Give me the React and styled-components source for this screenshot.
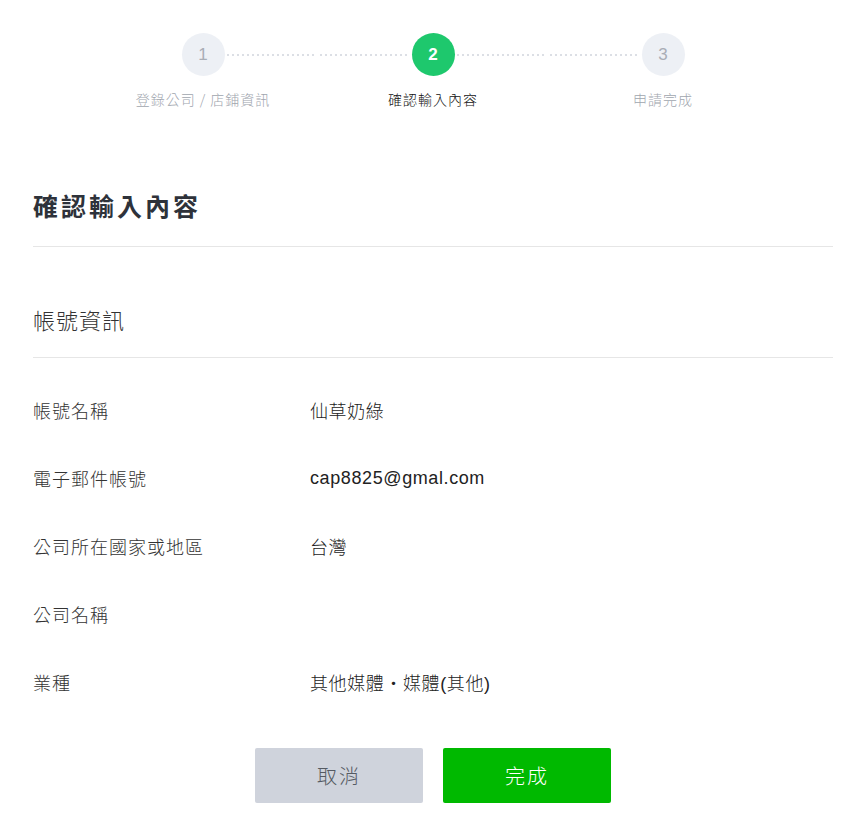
import styled, { createGlobalStyle } from "styled-components";

const GlobalStyle = createGlobalStyle`
  body {
    margin: 0;
    background: #ffffff;
    font-family: "Liberation Sans", "Noto Sans CJK TC", sans-serif;
    color: #333;
  }
`;

const steps = ["登錄公司 / 店鋪資訊", "確認輸入內容", "申請完成"];
const activeStep = 1;

const rows = [
  { label: "帳號名稱", value: "仙草奶綠" },
  { label: "電子郵件帳號", value: "cap8825@gmal.com" },
  { label: "公司所在國家或地區", value: "台灣" },
  { label: "公司名稱", value: "" },
  { label: "業種", value: "其他媒體・媒體(其他)" },
];

function App() {
  return (
    <>
      <GlobalStyle />
      <Page>
        <Stepper>
          {steps.map((s, i) => (
            <Step key={s}>
              <StepTrack>
                <Dots $hidden={i === 0} />
                <Circle $active={i === activeStep}>{i + 1}</Circle>
                <Dots $hidden={i === steps.length - 1} />
              </StepTrack>
              <StepLabel $active={i === activeStep}>{s}</StepLabel>
            </Step>
          ))}
        </Stepper>

        <Title>確認輸入內容</Title>
        <SectionTitle>帳號資訊</SectionTitle>

        <List>
          {rows.map((r) => (
            <Row key={r.label}>
              <Label>{r.label}</Label>
              <Value>{r.value}</Value>
            </Row>
          ))}
        </List>

        <Buttons>
          <Button>取消</Button>
          <Button $primary>完成</Button>
        </Buttons>
      </Page>
    </>
  );
}

const Page = styled.div`
  width: 800px;
  padding: 33px 10px 12px 33px;
`;

const Stepper = styled.div`
  display: grid;
  grid-template-columns: repeat(3, 230px);
  justify-content: center;
`;

const Step = styled.div`
  display: flex;
  flex-direction: column;
  align-items: center;
`;

const StepTrack = styled.div`
  width: 100%;
  display: flex;
  align-items: center;
`;

const Dots = styled.div`
  flex: 1;
  height: 2px;
  margin: 0 2px;
  visibility: ${(p) => (p.$hidden ? "hidden" : "visible")};
  background-image: repeating-linear-gradient(
    to right,
    #dcdfe5 0,
    #dcdfe5 2px,
    transparent 2px,
    transparent 5px
  );
`;

const Circle = styled.div`
  width: 43px;
  height: 43px;
  border-radius: 50%;
  display: flex;
  align-items: center;
  justify-content: center;
  font-family: "Liberation Sans", sans-serif;
  font-size: 17px;
  font-weight: ${(p) => (p.$active ? 700 : 400)};
  background: ${(p) => (p.$active ? "#1ec86d" : "#edf0f5")};
  color: ${(p) => (p.$active ? "#ffffff" : "#a9adb6")};
`;

const StepLabel = styled.div`
  margin-top: 13px;
  font-family: "Noto Sans CJK TC", sans-serif;
  font-size: 14px;
  line-height: 20px;
  font-weight: 300;
  letter-spacing: 1px;
  white-space: nowrap;
  color: ${(p) => (p.$active ? "#111111" : "#a0a5ae")};
`;

const Title = styled.h1`
  margin: 78px 0 0;
  padding-bottom: 23px;
  border-bottom: 1px solid #e6e6e6;
  font-family: "Noto Sans CJK TC", sans-serif;
  font-size: 25px;
  line-height: 36px;
  font-weight: 700;
  letter-spacing: 3px;
  color: #2e323a;
`;

const SectionTitle = styled.h2`
  margin: 0;
  padding: 57px 0 23px;
  border-bottom: 1px solid #e6e6e6;
  font-family: "Noto Sans CJK TC", sans-serif;
  font-size: 22px;
  line-height: 30px;
  font-weight: 300;
  letter-spacing: 1px;
  color: #333;
`;

const List = styled.div`
  padding-top: 18px;
`;

const Row = styled.div`
  display: grid;
  grid-template-columns: 277px 1fr;
  align-items: center;
  height: 68px;
`;

const Label = styled.div`
  font-family: "Noto Sans CJK TC", sans-serif;
  font-size: 18px;
  letter-spacing: 1px;
  font-weight: 300;
  color: #333;
`;

const Value = styled.div`
  font-family: "Liberation Sans", "Noto Sans CJK TC", sans-serif;
  font-size: 18px;
  letter-spacing: 0.6px;
  font-weight: 300;
  color: #222;
`;

const Buttons = styled.div`
  display: flex;
  justify-content: center;
  gap: 20px;
  margin-top: 32px;
`;

const Button = styled.button`
  width: 168px;
  height: 55px;
  border: none;
  border-radius: 2px;
  font-family: "Noto Sans CJK TC", sans-serif;
  font-size: 20px;
  font-weight: 300;
  letter-spacing: 2px;
  cursor: pointer;
  background: ${(p) => (p.$primary ? "#00b900" : "#cfd3dc")};
  color: ${(p) => (p.$primary ? "#ffffff" : "#555a62")};
`;

export default App;
